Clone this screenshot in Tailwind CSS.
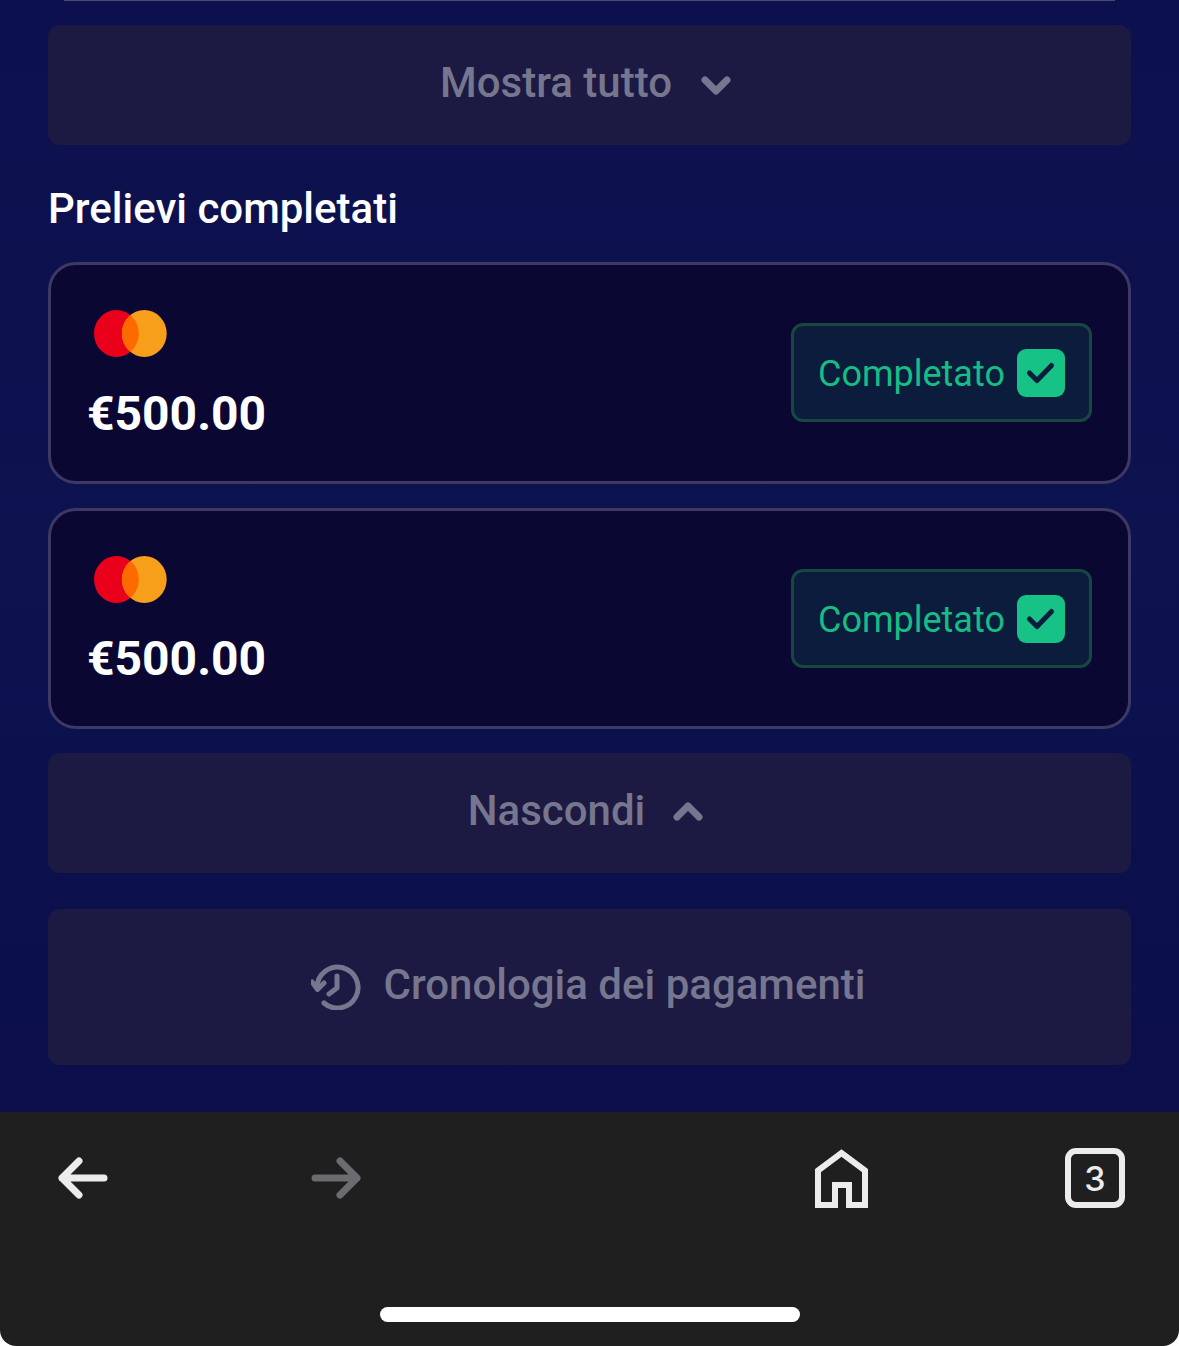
<!DOCTYPE html>
<html lang="en">
<head>
  <meta charset="UTF-8" />
  <title>Prelievi</title>
  <meta name="viewport" content="width=device-width, initial-scale=1" />
  <script src="https://cdn.jsdelivr.net/npm/@tailwindcss/browser@4"></script>
</head>
<body class="bg-white font-['Roboto',sans-serif]">
  <div class="w-[1179px] h-[1346px] flex flex-col overflow-hidden rounded-b-[16px]">

    <!-- Page -->
    <main class="h-[1112px] px-[48px] bg-gradient-to-b from-[#0d104e] via-[#0c134f] to-[#0b0e4b]">
      <div class="h-[1px] mx-[16px] bg-[#4a4a72]"></div>

      <button class="mt-[24px] w-full h-[120px] pb-[6px] pr-[8px] rounded-[12px] bg-[#1c1a42] flex items-center justify-center gap-[29px] text-[#76768f] text-[42px] font-medium">
        <span>Mostra tutto</span>
        <svg class="w-[30px] h-[19px] mt-[6px]" viewBox="0 0 30 19" fill="none" stroke="#76768f" stroke-width="7" stroke-linecap="round" stroke-linejoin="round"><path d="M4 4l11 11L26 4" /></svg>
      </button>

      <h2 class="mt-[39px] text-white text-[42px] leading-[50px] font-medium">Prelievi completati</h2>

      <!-- Withdrawals -->
      <div class="mt-[28px] h-[222px] rounded-[28px] border-[3px] border-[#3d3964] bg-[#0a0732] flex items-start justify-between pl-[36px] pr-[36px]">
        <div class="flex flex-col mt-[45px]">
          <svg class="ml-[7px] w-[73px] h-[47px]" viewBox="0 0 73 47"><ellipse cx="22.4" cy="23.5" rx="22.4" ry="23.5" fill="#eb001b" /><ellipse cx="50.3" cy="23.5" rx="22.4" ry="23.5" fill="#f79e1b" /><path d="M36.350 5.100A22.400 23.500 0 0 1 36.350 41.900A22.400 23.500 0 0 1 36.350 5.100z" fill="#ff6a00" /></svg>
          <span class="mt-[27px] text-white text-[48px] leading-[60px] font-bold">€500.00</span>
        </div>
        <div class="mt-[58px] w-[301px] h-[99px] rounded-[12px] border-[3px] border-[#17483f] bg-[#0c1c3c] flex items-center pl-[24px] gap-[12px]">
          <span class="mt-[2px] text-[#16bd85] text-[36px] leading-[46px]">Completato</span>
          <svg class="mt-[1px] w-[48px] h-[48px]" viewBox="0 0 48 48"><rect width="48" height="48" rx="9" fill="#16c285" /><path d="M12.500 24l7.500 7.500L34.500 16.500" fill="none" stroke="#0c1c3c" stroke-width="5" stroke-linecap="round" stroke-linejoin="round" /></svg>
        </div>
      </div>

      <div class="mt-[24px] h-[221px] rounded-[28px] border-[3px] border-[#3d3964] bg-[#0a0732] flex items-start justify-between pl-[36px] pr-[36px]">
        <div class="flex flex-col mt-[45px]">
          <svg class="ml-[7px] w-[73px] h-[47px]" viewBox="0 0 73 47"><ellipse cx="22.4" cy="23.5" rx="22.4" ry="23.5" fill="#eb001b" /><ellipse cx="50.3" cy="23.5" rx="22.4" ry="23.5" fill="#f79e1b" /><path d="M36.350 5.100A22.400 23.500 0 0 1 36.350 41.900A22.400 23.500 0 0 1 36.350 5.100z" fill="#ff6a00" /></svg>
          <span class="mt-[26px] text-white text-[48px] leading-[60px] font-bold">€500.00</span>
        </div>
        <div class="mt-[58px] w-[301px] h-[99px] rounded-[12px] border-[3px] border-[#17483f] bg-[#0c1c3c] flex items-center pl-[24px] gap-[12px]">
          <span class="mt-[2px] text-[#16bd85] text-[36px] leading-[46px]">Completato</span>
          <svg class="mt-[1px] w-[48px] h-[48px]" viewBox="0 0 48 48"><rect width="48" height="48" rx="9" fill="#16c285" /><path d="M12.500 24l7.500 7.500L34.500 16.500" fill="none" stroke="#0c1c3c" stroke-width="5" stroke-linecap="round" stroke-linejoin="round" /></svg>
        </div>
      </div>

      <button class="mt-[24px] w-full h-[120px] pb-[6px] pr-[8px] rounded-[12px] bg-[#1c1a42] flex items-center justify-center gap-[28px] text-[#76768f] text-[42px] font-medium">
        <span>Nascondi</span>
        <svg class="w-[30px] h-[19px] mt-[2px]" viewBox="0 0 30 19" fill="none" stroke="#76768f" stroke-width="7" stroke-linecap="round" stroke-linejoin="round"><path d="M4 15L15 4l11 11" /></svg>
      </button>

      <button class="mt-[36px] w-full h-[156px] pb-[6px] pr-[2px] rounded-[12px] bg-[#1c1a42] flex items-center justify-center gap-[22px] text-[#76768f] text-[42px] font-medium">
        <svg class="w-[50px] h-[46px] mt-[6px]" viewBox="0 0 50 46" fill="none" stroke="#76768f" stroke-width="5" stroke-linecap="round" stroke-linejoin="round">
          <path d="M6 23A20.5 20.5 0 1 1 13 39" />
          <path d="M1 18l5.500 7.500L13 19" />
          <path d="M26 12v12l-8 6" />
        </svg>
        <span>Cronologia dei pagamenti</span>
      </button>
    </main>

    <!-- Browser toolbar -->
    <nav class="relative flex-1 bg-[#1f1f1f] flex items-start justify-between pt-[36px] pl-[53px] pr-[54px]">
      <span class="w-[60px] h-[60px] flex items-center justify-center">
        <svg class="w-[50px] h-[42px]" viewBox="0 0 50 42" fill="none" stroke="#ececec" stroke-width="7" stroke-linecap="round" stroke-linejoin="round"><path d="M46 21H4M21 4L4 21l17 17" /></svg>
      </span>
      <span class="w-[60px] h-[60px] flex items-center justify-center">
        <svg class="w-[50px] h-[42px]" viewBox="0 0 50 42" fill="none" stroke="#6b6b70" stroke-width="7" stroke-linecap="round" stroke-linejoin="round"><path d="M4 21h42M29 4l17 17-17 17" /></svg>
      </span>
      <span class="w-[60px] h-[60px]"></span>
      <span class="w-[60px] h-[60px] pl-[3px]">
        <svg class="w-[53px] h-[60px]" viewBox="0 0 53 60" fill="none" stroke="#ececec" stroke-width="6"><path d="M3 57V22.500L26.500 5 50 22.500V57H34V37H20V57z" /></svg>
      </span>
      <span class="w-[60px] h-[60px] rounded-[11px] border-[6px] border-[#ececec] flex items-center justify-center text-[#ececec] text-[34px] font-medium font-['Inter',sans-serif]">3</span>
      <span class="absolute left-[380px] top-[195px] w-[420px] h-[15px] rounded-full bg-white"></span>
    </nav>
  </div>
</body>
</html>
